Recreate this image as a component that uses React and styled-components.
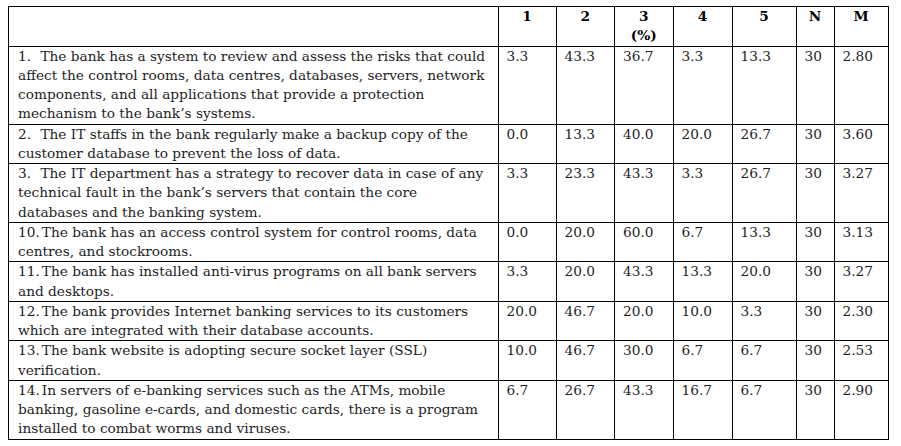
import React from "react";
import styled, { createGlobalStyle } from "styled-components";

const GlobalStyle = createGlobalStyle`
  html, body { margin: 0; padding: 0; background: #ffffff; }
  body { font-family: "DejaVu Serif", "Liberation Serif", serif; }
`;

const Page = styled.div`
  padding: 6px 0 0 8px;
`;

const Table = styled.table`
  border-collapse: collapse;
  table-layout: fixed;
  width: 880px;
  font-size: 13.7px;
  line-height: 19.25px;
  color: #1e1e1e;
`;

const HeadCell = styled.th`
  border: 1px solid #000;
  padding: 0;
  text-align: center;
  vertical-align: top;
  font-weight: bold;
  color: #000;
`;

const Cell = styled.td`
  border: 1px solid #000;
  padding: 0 4px 0 ${(p) => (p.$text ? "9px" : "8px")};
  vertical-align: top;
  text-align: left;
  white-space: nowrap;
`;

const ItemNo = styled.span`
  display: inline-block;
  box-sizing: border-box;
  min-width: 22.4px;
  padding-right: 2px;
`;

const ItemLine = styled.span`
  display: block;
`;

const columns = [489.5, 58, 58.5, 58.5, 59, 64, 38, 54];

const rows = [
  {
    no: "1.",
    lines: [
      "The bank has a system to review and assess the risks that could",
      "affect the control rooms, data centres, databases, servers, network",
      "components, and all applications that provide a protection",
      "mechanism to the bank’s systems.",
    ],
    values: ["3.3", "43.3", "36.7", "3.3", "13.3", "30", "2.80"],
  },
  {
    no: "2.",
    lines: [
      "The IT staffs in the bank regularly make a backup copy of the",
      "customer database to prevent the loss of data.",
    ],
    values: ["0.0", "13.3", "40.0", "20.0", "26.7", "30", "3.60"],
  },
  {
    no: "3.",
    lines: [
      "The IT department has a strategy to recover data in case of any",
      "technical fault in the bank’s servers that contain the core",
      "databases and the banking system.",
    ],
    values: ["3.3", "23.3", "43.3", "3.3", "26.7", "30", "3.27"],
  },
  {
    no: "10.",
    lines: [
      "The bank has an access control system for control rooms, data",
      "centres, and stockrooms.",
    ],
    values: ["0.0", "20.0", "60.0", "6.7", "13.3", "30", "3.13"],
  },
  {
    no: "11.",
    lines: [
      "The bank has installed anti-virus programs on all bank servers",
      "and desktops.",
    ],
    values: ["3.3", "20.0", "43.3", "13.3", "20.0", "30", "3.27"],
  },
  {
    no: "12.",
    lines: [
      "The bank provides Internet banking services to its customers",
      "which are integrated with their database accounts.",
    ],
    values: ["20.0", "46.7", "20.0", "10.0", "3.3", "30", "2.30"],
  },
  {
    no: "13.",
    lines: [
      "The bank website is adopting secure socket layer (SSL)",
      "verification.",
    ],
    values: ["10.0", "46.7", "30.0", "6.7", "6.7", "30", "2.53"],
  },
  {
    no: "14.",
    lines: [
      "In servers of e-banking services such as the ATMs, mobile",
      "banking, gasoline e-cards, and domestic cards, there is a program",
      "installed to combat worms and viruses.",
    ],
    values: ["6.7", "26.7", "43.3", "16.7", "6.7", "30", "2.90"],
  },
];

export default function App() {
  return (
    <Page>
      <GlobalStyle />
      <Table>
        <colgroup>
          {columns.map((w, i) => (
            <col key={i} width={w} />
          ))}
        </colgroup>
        <thead>
          <tr>
            <HeadCell />
            <HeadCell>1</HeadCell>
            <HeadCell>2</HeadCell>
            <HeadCell>
              3<br />(%)
            </HeadCell>
            <HeadCell>4</HeadCell>
            <HeadCell>5</HeadCell>
            <HeadCell>N</HeadCell>
            <HeadCell>M</HeadCell>
          </tr>
        </thead>
        <tbody>
          {rows.map((r) => (
            <tr key={r.no}>
              <Cell $text>
                {r.lines.map((l, i) => (
                  <ItemLine key={i}>
                    {i === 0 && <ItemNo>{r.no}</ItemNo>}
                    {l}
                  </ItemLine>
                ))}
              </Cell>
              {r.values.map((v, i) => (
                <Cell key={i}>{v}</Cell>
              ))}
            </tr>
          ))}
        </tbody>
      </Table>
    </Page>
  );
}
